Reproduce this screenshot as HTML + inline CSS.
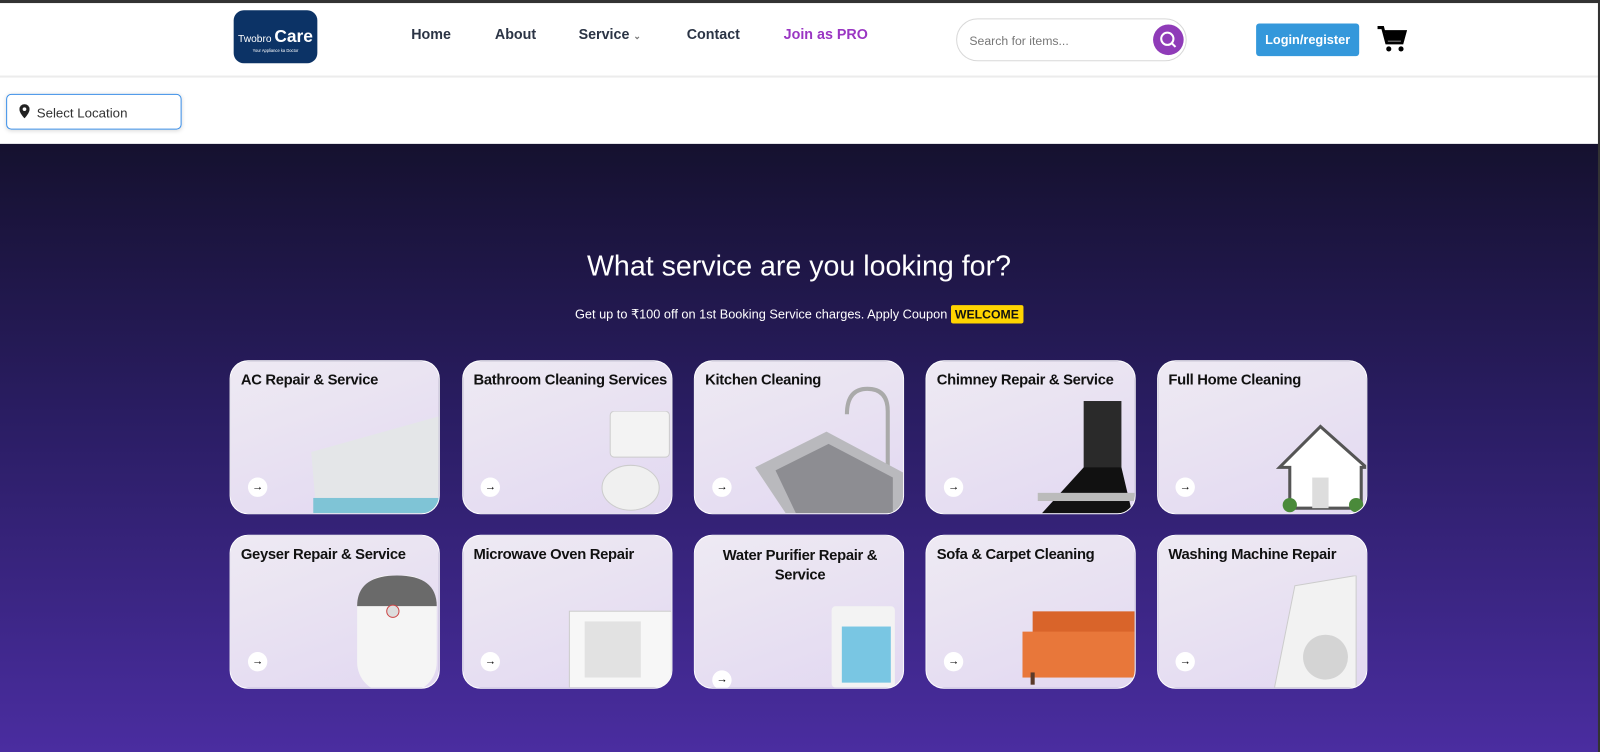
<!DOCTYPE html>
<html><head><meta charset="utf-8"><style>
*{box-sizing:border-box;margin:0;padding:0}
body{width:1600px;height:752px;overflow:hidden;background:#4a2da0;font-family:"Liberation Sans",sans-serif;position:relative}
#w{position:absolute;left:0;top:0;width:1568px;height:737px;transform:scale(1.0204);transform-origin:0 0;background:#fff}
.frame-top{position:absolute;left:0;top:0;width:1568px;height:3px;background:#333;z-index:9}
.frame-r{position:absolute;left:1566px;top:0;width:3px;height:737px;background:#333;z-index:9}
header{position:absolute;left:0;top:3px;width:1568px;height:73px;border-bottom:2px solid #ececec;background:#fff}
.logo{position:absolute;left:229px;top:7px;width:82px;height:52px;background:#0c3366;border-radius:10px;color:#fff;text-align:center}
.logo b{display:block;font-size:10px;margin-top:16px;font-weight:normal}
.logo b span{font-size:17px;font-weight:bold}
.logo i{display:block;font-size:4px;font-style:normal;margin-top:1px}
.nav{position:absolute;top:22px;font-size:14px;font-weight:bold;color:#2b3445}
.search{position:absolute;left:937px;top:15px;width:226px;height:42px;border:1px solid #d8d8d8;border-radius:21px}
.search span{position:absolute;left:12px;top:14px;font-size:12px;color:#777}
.search .b{position:absolute;left:192px;top:5px;width:30px;height:30px;border-radius:50%;background:#8f3bb8}
.login{position:absolute;left:1231px;top:20px;width:101px;height:32px;background:#3498db;border-radius:3px;color:#fff;font-size:12.5px;font-weight:bold;text-align:center;line-height:32px}
.loc{position:absolute;left:6px;top:92px;width:172px;height:35px;border:1px solid #3b8fe8;border-radius:5px;box-shadow:0 1px 4px rgba(0,0,0,.15);font-size:13px;color:#333;padding:10px 0 0 29px}
.hero{position:absolute;left:0;top:141px;width:1568px;height:596px;background:linear-gradient(#15112f,#2a1d63 45%,#4a2da0)}
h1{position:absolute;top:245px;left:0;width:1566px;text-align:center;color:#fff;font-weight:normal;font-size:28px}
.sub{position:absolute;top:300px;left:0;width:1566px;text-align:center;color:#fff;font-size:12.5px}
.sub b{background:#ffd400;color:#111;padding:2px 4px;border-radius:2px;font-size:12px}
.card{position:absolute;width:206px;height:151px;border-radius:18px;background:linear-gradient(160deg,#eeeaf3,#e2d8f1);overflow:hidden;border:1px solid #fff}
.card h3{position:absolute;left:10px;top:11px;font-size:14.5px;letter-spacing:-0.3px;color:#111;font-weight:bold;white-space:nowrap}
.card .ar{position:absolute;left:17px;top:114px;width:19px;height:19px;border-radius:50%;background:#fff;font-size:11px;text-align:center;line-height:19px;color:#000}
.card svg{position:absolute;right:0;bottom:0}
</style></head><body><div id="w">
<div class="frame-top"></div><div class="frame-r"></div>
<header>
<div class="logo"><b>Twobro <span>Care</span></b><i>Your Appliance ka Doctor</i></div>
<div class="nav" style="left:403px">Home</div>
<div class="nav" style="left:485px">About</div>
<div class="nav" style="left:567px">Service <span style="font-size:9px;color:#777">&#8964;</span></div>
<div class="nav" style="left:673px">Contact</div>
<div class="nav" style="left:768px;color:#9a36c3">Join as PRO</div>
<div class="search"><span>Search for items...</span><div class="b"><svg width="30" height="30"><circle cx="14" cy="14" r="6" fill="none" stroke="#fff" stroke-width="2"/><line x1="18.5" y1="18.5" x2="22" y2="22" stroke="#fff" stroke-width="2"/></svg></div></div>
<div class="login">Login/register</div>
<svg style="position:absolute;left:1349px;top:22px" width="30" height="27" viewBox="0 0 30 27"><path d="M1 2h5l4 15h15l3-11H8" fill="none" stroke="#000" stroke-width="3"/><rect x="9" y="7" width="18" height="8" fill="#000"/><circle cx="12" cy="23" r="2.5"/><circle cx="24" cy="23" r="2.5"/></svg>
</header>
<div class="loc"><svg style="position:absolute;left:12px;top:9px" width="10" height="14" viewBox="0 0 10 14"><path d="M5 0a5 5 0 0 1 5 5c0 4-5 9-5 9S0 9 0 5a5 5 0 0 1 5-5z" fill="#222"/><circle cx="5" cy="5" r="1.8" fill="#fff"/></svg>Select Location</div>
<div class="hero"></div>
<h1>What service are you looking for?</h1>
<div class="sub">Get up to ₹100 off on 1st Booking Service charges. Apply Coupon <b>WELCOME</b></div>

<div class="card" style="left:225px;top:353px"><h3>AC Repair &amp; Service</h3><svg width="135" height="100"><path d="M10 40L135 5V100H15Z" fill="#e4e6e8"/><rect x="12" y="85" width="123" height="15" fill="#7fc4d6"/></svg><div class="ar">→</div></div>
<div class="card" style="left:453px;top:353px"><h3>Bathroom Cleaning Services</h3><svg width="85" height="100"><rect x="25" y="0" width="58" height="45" rx="4" fill="#f3f3f3" stroke="#ccc"/><ellipse cx="45" cy="75" rx="28" ry="22" fill="#f0f0f0" stroke="#ccc"/></svg><div class="ar">→</div></div>
<div class="card" style="left:680px;top:353px"><h3>Kitchen Cleaning</h3><svg width="145" height="130"><path d="M130 130V30q0-22-20-22t-20 25" fill="none" stroke="#aaa" stroke-width="4"/><path d="M0 85L70 50L145 90V130H30Z" fill="#b9b9bd"/><path d="M20 88L72 62L135 95V130H40Z" fill="#8d8d92"/></svg><div class="ar">→</div></div>
<div class="card" style="left:907px;top:353px"><h3>Chimney Repair &amp; Service</h3><svg width="100" height="115"><rect x="50" y="5" width="37" height="70" fill="#2a2a2a"/><path d="M50 70H87L100 125H0Z" fill="#111"/><rect x="5" y="95" width="95" height="8" fill="#bbb"/></svg><div class="ar">→</div></div>
<div class="card" style="left:1134px;top:353px"><h3>Full Home Cleaning</h3><svg width="90" height="90"><path d="M45 5L5 45H15V85H85V45H90Z" fill="#fff" stroke="#555" stroke-width="3"/><rect x="37" y="55" width="16" height="30" fill="#ddd"/><circle cx="15" cy="82" r="7" fill="#4a8a3a"/><circle cx="80" cy="82" r="7" fill="#4a8a3a"/></svg><div class="ar">→</div></div>

<div class="card" style="left:225px;top:524px"><h3>Geyser Repair &amp; Service</h3><svg width="85" height="110"><rect x="5" y="0" width="78" height="115" rx="30" fill="#f5f5f5"/><path d="M5 30Q5 0 44 0T83 30Z" fill="#6a6a6a"/><circle cx="40" cy="35" r="6" fill="#ddd" stroke="#c44"/></svg><div class="ar">→</div></div>
<div class="card" style="left:453px;top:524px"><h3>Microwave Oven Repair</h3><svg width="110" height="80"><rect x="10" y="5" width="100" height="75" fill="#f7f7f7" stroke="#ccc"/><rect x="25" y="15" width="55" height="55" fill="#e2e2e2"/></svg><div class="ar">→</div></div>
<div class="card" style="left:680px;top:524px"><h3 style="left:0;width:206px;text-align:center;white-space:normal;padding:0 14px;line-height:19px">Water Purifier Repair &amp; Service</h3><svg width="75" height="80"><rect x="5" y="0" width="62" height="80" rx="4" fill="#f3f3f3"/><rect x="15" y="20" width="48" height="55" fill="#79c6e3"/></svg><div class="ar" style="top:132px">→</div></div>
<div class="card" style="left:907px;top:524px"><h3>Sofa &amp; Carpet Cleaning</h3><svg width="110" height="75"><rect x="10" y="0" width="100" height="35" fill="#d9642a"/><rect x="0" y="20" width="110" height="45" fill="#e8773a"/><rect x="8" y="60" width="4" height="12" fill="#5a3a2a"/></svg><div class="ar">→</div></div>
<div class="card" style="left:1134px;top:524px"><h3>Washing Machine Repair</h3><svg width="100" height="110"><path d="M30 10L90 0V110H10Z" fill="#f2f2f2" stroke="#ccc"/><circle cx="60" cy="80" r="22" fill="#d4d4d4"/></svg><div class="ar">→</div></div>
</div></body></html>
